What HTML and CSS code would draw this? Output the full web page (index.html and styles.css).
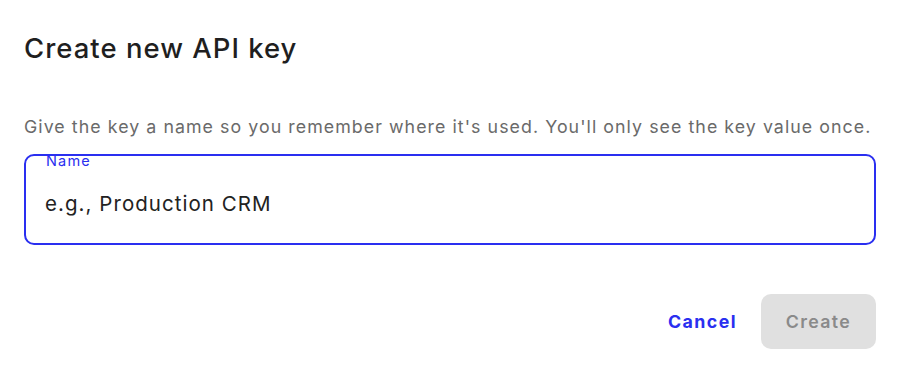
FILE: index.html
```html
<!DOCTYPE html>
<html>
<head>
<meta charset="utf-8">
<link rel="stylesheet" href="styles.css">
</head>
<body>
<div class="dialog">
  <h1 class="title">Create new API key</h1>
  <p class="desc">Give the key a name so you remember where it's used. You'll only see the key value once.</p>
  <div class="field">
    <span class="label">Name</span>
    <input class="input" type="text" placeholder="e.g., Production CRM">
  </div>
  <div class="actions">
    <button class="btn-cancel">Cancel</button>
    <button class="btn-create" disabled>Create</button>
  </div>
</div>
</body>
</html>
```
FILE: styles.css
```css
* { box-sizing: border-box; }
html, body { margin: 0; padding: 0; background: #fff; }
body { font-family: Inter, "Noto Sans", sans-serif; width: 900px; height: 373px; overflow: hidden; }
.dialog { padding: 30px 24px 0 24px; display: flex; flex-direction: column; }
.title { margin: 0; font-size: 27.5px; font-weight: 500; color: #1f1f1f; line-height: 36px; letter-spacing: 1px; }
.desc { margin: 49px 0 0 0; font-size: 17.8px; color: #6a6a6a; line-height: 24px; letter-spacing: 1.05px; white-space: nowrap; }
.field { position: relative; margin-top: 15px; height: 91px; border: 2px solid #2a2ff0; border-radius: 10px; display: flex; align-items: center; padding: 0 19px; }
.label { position: absolute; left: 20px; top: -3px; font-size: 14.5px; color: #2a2ff0; line-height: 16px; letter-spacing: 1.2px; }
.input { border: none; outline: none; width: 100%; font-family: inherit; font-size: 20.5px; color: #222; padding: 0; margin-top: 8px; background: transparent; letter-spacing: 1.05px; }
.input::placeholder { color: #222; }
.actions { display: flex; justify-content: flex-end; align-items: center; gap: 24px; margin-top: 49px; }
.btn-cancel { border: none; background: none; font-family: inherit; font-size: 17.8px; font-weight: 700; color: #2a2ff0; padding: 0; cursor: pointer; letter-spacing: 1.45px; }
.btn-create { border: none; background: #e0e0e0; border-radius: 10px; width: 115px; height: 55px; font-family: inherit; font-size: 17.8px; font-weight: 600; color: #8a8a8a; padding: 0; letter-spacing: 1.35px; }
```
